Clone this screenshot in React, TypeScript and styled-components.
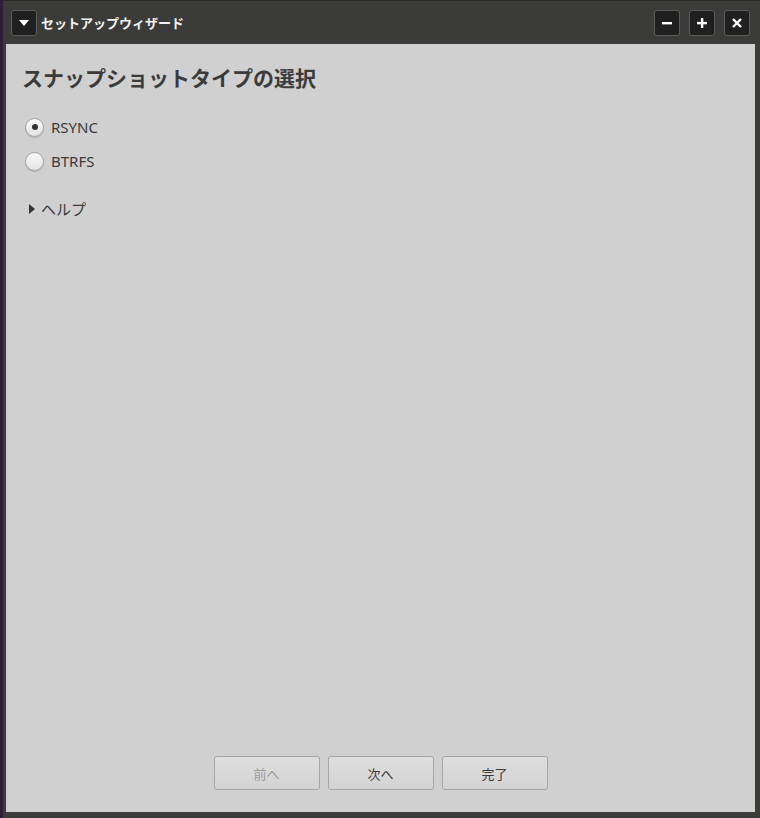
import styled, { createGlobalStyle } from 'styled-components';

const GlobalStyle = createGlobalStyle`
  html, body {
    margin: 0;
    padding: 0;
    background: #2b2038;
  }
  body {
    font-family: "Noto Sans", "Noto Sans CJK JP", sans-serif;
  }
`;

const Desktop = styled.div`
  width: 760px;
  height: 818px;
  display: flex;
  padding-left: 3px;
  box-sizing: border-box;
`;

const Window = styled.div`
  flex: 1;
  display: flex;
  flex-direction: column;
  background: #3b3c39;
  border-top: 1px solid #2a2b29;
  padding: 0 5px 6px 3px;
  box-sizing: border-box;
`;

const TitleBar = styled.div`
  height: 43px;
  display: flex;
  align-items: center;
  padding: 0 5px 0 5px;
  gap: 4px;
`;

const TitleButton = styled.button<{ $gap?: number }>`
  width: 26px;
  height: 26px;
  padding: 0;
  display: flex;
  align-items: center;
  justify-content: center;
  background: #1f1f1f;
  border: 1px solid #5b5c59;
  border-radius: 3px;
  color: #fff;
  margin-left: ${(p) => p.$gap ?? 0}px;
`;

const Title = styled.span`
  flex: 1;
  color: #f2f2f2;
  font-family: "Noto Sans CJK JP", sans-serif;
  font-weight: 700;
  font-size: 13px;
`;

const Content = styled.div`
  flex: 1;
  background: #d0d0d0;
  display: flex;
  flex-direction: column;
  padding: 19px 16px 22px 16px;
`;

const Heading = styled.h1`
  margin: 0 0 18px 0;
  font-family: "Noto Sans CJK JP", sans-serif;
  font-weight: 700;
  font-size: 21px;
  line-height: 29px;
  color: #3b3b3b;
`;

const RadioRow = styled.label`
  display: flex;
  align-items: center;
  gap: 7px;
  height: 34px;
  padding-left: 3px;
  font-size: 15px;
  color: #3a3a3a;
`;

const RadioCircle = styled.span<{ $checked?: boolean }>`
  width: 19px;
  height: 19px;
  border-radius: 50%;
  box-sizing: border-box;
  border: 1px solid #a3a3a3;
  background: linear-gradient(#fafafa, #e3e3e3);
  box-shadow: 0 1px 1px rgba(0, 0, 0, 0.15);
  display: flex;
  align-items: center;
  justify-content: center;
  &::after {
    content: '';
    display: ${(p) => (p.$checked ? 'block' : 'none')};
    width: 6px;
    height: 6px;
    border-radius: 50%;
    background: #333;
  }
`;

const Expander = styled.div`
  display: flex;
  align-items: center;
  gap: 6px;
  margin-top: 20px;
  padding-left: 7px;
  font-family: "Noto Sans CJK JP", sans-serif;
  font-size: 15px;
  color: #3a3a3a;
`;

const Spacer = styled.div`
  flex: 1;
`;

const ButtonRow = styled.div`
  display: flex;
  justify-content: center;
  gap: 8px;
`;

const NavButton = styled.button`
  width: 106px;
  height: 34px;
  border: 1px solid #a6a6a6;
  border-radius: 3px;
  background: linear-gradient(#dedede, #d3d3d3);
  font-family: "Noto Sans CJK JP", sans-serif;
  font-size: 13px;
  color: ${(p) => (p.disabled ? '#9a9a9a' : '#3a3a3a')};
`;

export default function App() {
  return (
    <>
      <GlobalStyle />
      <Desktop>
        <Window>
          <TitleBar>
            <TitleButton>
              <svg width="10" height="6" viewBox="0 0 10 6">
                <path d="M0 0 L10 0 L5 6 Z" fill="#fff" />
              </svg>
            </TitleButton>
            <Title>セットアップウィザード</Title>
            <TitleButton>
              <svg width="10" height="10" viewBox="0 0 10 10">
                <rect x="0" y="4" width="10" height="2.4" fill="#fff" />
              </svg>
            </TitleButton>
            <TitleButton $gap={5}>
              <svg width="10" height="10" viewBox="0 0 10 10">
                <rect x="0" y="3.9" width="10" height="2.4" fill="#fff" />
                <rect x="3.9" y="0" width="2.4" height="10" fill="#fff" />
              </svg>
            </TitleButton>
            <TitleButton $gap={5}>
              <svg width="10" height="10" viewBox="0 0 10 10">
                <path d="M1 1 L9 9 M9 1 L1 9" stroke="#fff" strokeWidth="2.4" />
              </svg>
            </TitleButton>
          </TitleBar>
          <Content>
            <Heading>スナップショットタイプの選択</Heading>
            <RadioRow>
              <RadioCircle $checked />
              RSYNC
            </RadioRow>
            <RadioRow>
              <RadioCircle />
              BTRFS
            </RadioRow>
            <Expander>
              <svg width="6" height="10" viewBox="0 0 6 10">
                <path d="M0 0 L6 5 L0 10 Z" fill="#333" />
              </svg>
              ヘルプ
            </Expander>
            <Spacer />
            <ButtonRow>
              <NavButton disabled>前へ</NavButton>
              <NavButton>次へ</NavButton>
              <NavButton>完了</NavButton>
            </ButtonRow>
          </Content>
        </Window>
      </Desktop>
    </>
  );
}
